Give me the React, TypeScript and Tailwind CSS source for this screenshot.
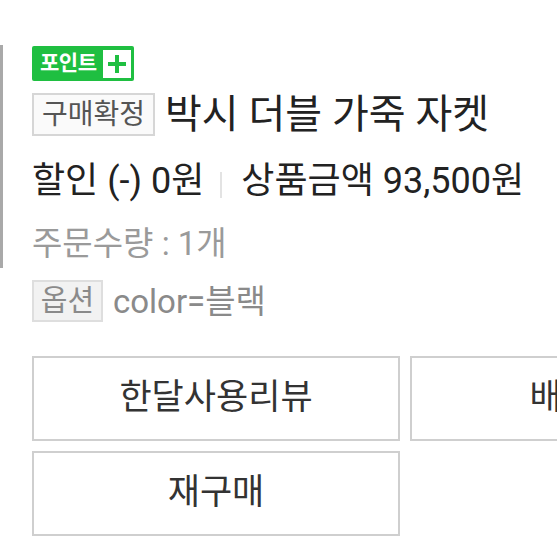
import React from "react";

const font = { fontFamily: 'Roboto, "Noto Sans CJK KR", sans-serif' };

export default function App() {
  return (
    <div className="w-[557px] h-[557px] bg-white overflow-hidden text-[#222]" style={font}>
      <div className="flex pt-[45px]">
        <div className="w-[3px] h-[223px] bg-[#a9a9a9] shrink-0" />
        <div className="ml-[29px] flex flex-col">
          <div className="flex items-center self-start h-[35px] mt-[1px] bg-[#1fbf41] pl-[8px] pr-[3px] rounded-[2px]">
            <span className="text-white font-bold text-[21px] leading-none tracking-[-0.5px]">포인트</span>
            <div className="ml-[7px] w-[28px] h-[28px] bg-white flex items-center justify-center">
              <svg width="20" height="20" viewBox="0 0 20 20">
                <rect x="8" y="1" width="4" height="18" fill="#1fbf41" />
                <rect x="1" y="8" width="18" height="4" fill="#1fbf41" />
              </svg>
            </div>
          </div>
          <div className="flex items-center mt-[12px]">
            <div className="h-[43px] w-[123px] border-2 border-[#d6d6d6] bg-[#fafafa] flex items-center justify-center text-[28px] text-[#555] leading-none">
              구매확정
            </div>
            <div className="ml-[10px] text-[40px] leading-none text-[#222]">박시 더블 가죽 자켓</div>
          </div>
          <div className="flex items-center mt-[25px] h-[40px] text-[36px] leading-none text-[#222]">
            <span>할인 (-) 0원</span>
            <span className="ml-[16px] mr-[19px] mt-[8px] w-[2px] h-[26px] bg-[#e3e3e3]" />
            <span>상품금액 93,500원</span>
          </div>
          <div className="mt-[24px] h-[36px] flex items-center text-[33px] leading-none text-[#9a9a9a]">
            주문수량 : 1개
          </div>
          <div className="flex items-center mt-[19px]">
            <div className="h-[42px] w-[71px] border-2 border-[#dedede] bg-[#f2f2f2] flex items-center justify-center text-[29px] text-[#8a8a8a] leading-none">
              옵션
            </div>
            <div className="ml-[10px] text-[33px] leading-none text-[#8a8a8a]">color=블랙</div>
          </div>
        </div>
      </div>
      <div className="mt-[34px] pl-[32px] grid grid-cols-[368px_368px] gap-[10px]">
        <div className="h-[85px] border-2 border-[#cfcfcf] flex items-center justify-center text-[35px] text-[#333]">
          한달사용리뷰
        </div>
        <div className="h-[85px] border-2 border-[#cfcfcf] flex items-center justify-center text-[35px] text-[#333]">
          배송문의
        </div>
        <div className="h-[85px] border-2 border-[#cfcfcf] flex items-center justify-center text-[35px] text-[#333]">
          재구매
        </div>
      </div>
    </div>
  );
}
